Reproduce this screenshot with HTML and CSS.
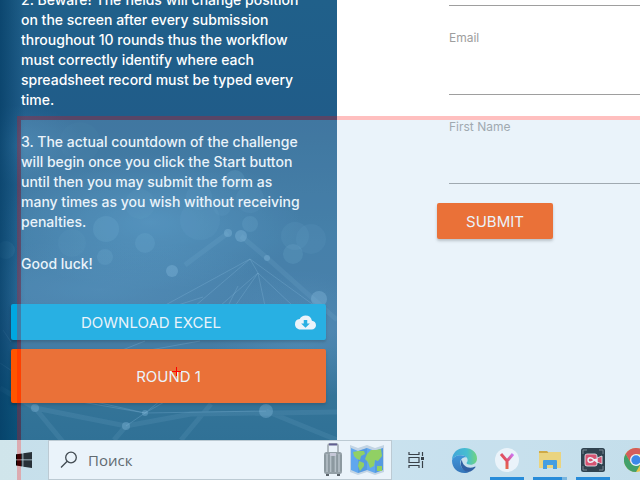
FILE: index.html
```html
<!DOCTYPE html>
<html lang="en">
<head>
<meta charset="utf-8">
<meta name="viewport" content="width=device-width, initial-scale=1">
<title>Challenge</title>
<link rel="stylesheet" href="styles.css">
</head>
<body>
<main class="page">
  <section class="guide">
    <svg class="backdrop" viewBox="0 0 337 440" preserveAspectRatio="none" aria-hidden="true">
      <defs>
        <linearGradient id="base" x1="0" y1="0" x2="0" y2="1">
          <stop offset="0" stop-color="#20608a"/>
          <stop offset=".27" stop-color="#205c89"/>
          <stop offset=".55" stop-color="#286996"/>
          <stop offset=".75" stop-color="#2c6795"/>
          <stop offset=".9" stop-color="#11587f"/>
          <stop offset="1" stop-color="#0b557c"/>
        </linearGradient>
        <linearGradient id="edge">
          <stop offset="0" stop-color="#053e66" stop-opacity=".75"/>
          <stop offset="1" stop-color="#053e66" stop-opacity="0"/>
        </linearGradient>
        <radialGradient id="glow">
          <stop offset="0" stop-color="#4e9aca" stop-opacity=".5"/>
          <stop offset="1" stop-color="#4e9aca" stop-opacity="0"/>
        </radialGradient>
      </defs>
      <rect width="337" height="440" fill="url(#base)"/>
      <ellipse cx="150" cy="222" rx="150" ry="68" fill="url(#glow)"/>
      <ellipse cx="100" cy="290" rx="190" ry="50" fill="url(#glow)" opacity=".6"/>
      <ellipse cx="20" cy="145" rx="65" ry="40" fill="url(#glow)" opacity=".6"/>
      <ellipse cx="300" cy="335" rx="90" ry="65" fill="url(#glow)" opacity=".6"/>
      <g fill="#78b9df" fill-opacity=".15">
        <circle cx="106" cy="229" r="13"/><circle cx="145" cy="243" r="10"/>
        <circle cx="105" cy="257" r="8"/><circle cx="6" cy="250" r="9"/>
        <circle cx="235" cy="180" r="10"/><circle cx="250" cy="199" r="14" opacity=".5"/>
        <circle cx="199" cy="197" r="13" opacity=".5"/><circle cx="200" cy="220" r="20" opacity=".5"/>
        <circle cx="250" cy="224" r="8"/><circle cx="295" cy="236" r="14" opacity=".6"/>
        <circle cx="311" cy="239" r="15" opacity=".5"/><circle cx="293" cy="254" r="10"/>
        <circle cx="72" cy="243" r="14" opacity=".4"/><circle cx="222" cy="207" r="9" opacity=".5"/>
        <circle cx="140" cy="204" r="15" opacity=".4"/><circle cx="80" cy="142" r="20" opacity=".2"/>
      </g>
      <g fill="#7db7dc" fill-opacity=".36">
        <circle cx="228" cy="233" r="4"/><circle cx="241" cy="236" r="6"/>
        <circle cx="172" cy="271" r="6"/><circle cx="267" cy="258" r="3"/>
        <circle cx="319" cy="299" r="8"/><circle cx="266" cy="411" r="7"/>
        <circle cx="126" cy="426" r="4"/><circle cx="145" cy="413" r="3"/>
        <circle cx="35" cy="408" r="4"/>
      </g>
      <g fill="none" stroke="#87bce0" stroke-opacity=".26">
        <path d="M195 306 250 259l65 47M220 306l38-33 35 33M250 259l8 14-23 33M258 273l7 33M250 259l-90 49M175 306l28-9M238 286l-10 20"/>
        <path d="m145 341-45 18 100-18M3 330l8 12M0 363l12 8M60 394l85 19 25-20M70 400l75 13 35-20M145 413l121-2M126 426l19-13"/>
      </g>
      <g fill="none" stroke="#87bce0" stroke-opacity=".12" stroke-width="5">
        <path d="m241 236 26 22 70 62M35 408l28 34M0 388l35 20M185 265l43-32M35 408l91 18 65-12 147-2M126 426l-12 14M211 404l-30 36M266 411l71 29"/>
      </g>
      <rect width="25" height="440" fill="url(#edge)"/>
    </svg>
    <div class="copy">
      <p>2. Beware! The fields will change position<br>on the screen after every submission<br>throughout 10 rounds thus the workflow<br>must correctly identify where each<br>spreadsheet record must be typed every<br>time.</p>
      <p>3. The actual countdown of the challenge<br>will begin once you click the Start button<br>until then you may submit the form as<br>many times as you wish without receiving<br>penalties.</p>
      <p>Good luck!</p>
    </div>
    <div class="actions">
      <a class="btn download" href="#"><span>DOWNLOAD EXCEL</span>
        <svg width="21" height="21" viewBox="0 0 24 24" aria-hidden="true"><path fill="currentColor" d="M19.35 10.04A7.49 7.49 0 0 0 12 4C9.11 4 6.6 5.64 5.35 8.04A5.994 5.994 0 0 0 0 14c0 3.31 2.69 6 6 6h13c2.76 0 5-2.24 5-5 0-2.64-2.05-4.78-4.65-4.96zM17 13l-5 5-5-5h3V9h4v4h3z"/></svg>
      </a>
      <button class="btn round" type="button">ROUND 1</button>
    </div>
  </section>
  <form class="entry">
    <div class="field first"><input type="text" aria-label="Address"></div>
    <div class="field"><label for="email">Email</label><input id="email" type="text"></div>
    <div class="field"><label for="first-name">First Name</label><input id="first-name" type="text"></div>
    <button class="btn submit" type="button">SUBMIT</button>
  </form>
</main>

<footer class="taskbar">
  <button class="start" type="button" aria-label="Start">
    <svg width="16" height="16" viewBox="0 0 16 16"><path d="M0 2.3 6.5 1.4v6.1H0zM7.3 1.3 16 0v7.5H7.3zM0 8.3h6.5v6.2L0 13.6zM7.3 8.3H16V16l-8.7-1.3z"/></svg>
  </button>
  <label class="search">
    <svg width="18" height="18" viewBox="0 0 18 18" fill="none" stroke="#222" stroke-width="1.3"><circle cx="11" cy="6.5" r="5.3"/><path d="M7.2 10.3 1 16.5"/></svg>
    <input type="text" placeholder="Поиск" aria-label="Поиск">
    <svg class="suitcase" width="20" height="34" viewBox="0 0 20 34">
      <path d="M5 11V2.5Q5 1 6.500 1h7Q15 1 15 2.500V11" fill="none" stroke="#999" stroke-width="1.500"/>
      <path d="M6 1.500h8" stroke="#4a3d76" stroke-width="2"/>
      <rect x="3" y="30" width="3" height="3" fill="#444"/><rect x="14" y="30" width="3" height="3" fill="#444"/>
      <rect x="1" y="9" width="18" height="22" rx="2.500" fill="#8e9293"/>
      <path d="M4 11v18M7.500 11v18M12.500 11v18M16 11v18" stroke="#b9bcbd" stroke-width="1.500"/>
      <path d="M2 12v16M6 12v17M10 12v17M14 12v17M18 12v16" stroke="#747879" stroke-width=".7"/>
      <rect x="7" y="10" width="6" height="3" fill="#cfc6d2"/>
    </svg>
    <svg class="map" width="34" height="32" viewBox="0 0 34 32">
      <path d="m0 1 8 3 9-3 8 3 9-3v27l-9 3-8-3-9 3-8-3z" fill="#cbd7e2"/>
      <path d="m1 4 7 3 9-3 8 3 8-3v22l-8 3-8-3-9 3-7-3z" fill="#4a9cf0"/>
      <path d="m8 7 9-3v22l-9 3zM25 7l8-3v22l-8 3z" fill="#2c78c7" opacity=".45"/>
      <path d="m3 8 5-1 6 0 1 3-4 2-1 4-3-1-3-3zM9 17l5 2 0 3-4 5-2-5zM17 10l4-4 5 0 5-1 1 7-4 5-3-1-1 6-4 2-2-6-3-3zM27 22h5v5h-5z" fill="#8bd13b"/>
    </svg>
  </label>
  <nav class="apps">
    <button type="button" class="app" aria-label="Task view"><svg width="17" height="16" viewBox="0 0 17 16" fill="none" stroke="#161616" stroke-width="1.200"><path d="M1 0v2.500h10V0M1 16v-2.500h10V16M1 5.500h10v5H1zM14.500 0v4M14.500 9v7"/><path d="M13 5h3v3h-3z" fill="#161616" stroke="none"/></svg></button>
    <button type="button" class="app" aria-label="Edge"><svg width="25" height="25" viewBox="0 0 24 24">
      <defs><linearGradient id="eg1"><stop offset="0" stop-color="#239bd5"/><stop offset=".6" stop-color="#28b9c9"/><stop offset="1" stop-color="#62d75c"/></linearGradient><linearGradient id="eg2" x1="0" y1="0" x2="0" y2="1"><stop offset="0" stop-color="#2086d6"/><stop offset="1" stop-color="#125bab"/></linearGradient></defs>
      <path d="M0 12C0 4 6 0 12 0c7 0 12 4.500 12 10 0 4-3 6-6 6-2.500 0-4-.8-4-1.700 0-.6 1-1 1-2.800C15 9 12 7 8.500 7 4 7 1 9 0 12z" fill="url(#eg1)"/>
      <path d="M0 12c1-3 4-5 8.500-5 2.500 0 4.500.8 5.500 2-3-.7-6 1.500-6 5 0 5 4 9 9 8.500-1.500 1-3 1.500-5 1.500C5 24 0 19 0 12z" fill="url(#eg2)"/>
      <path d="M9.500 11C7 15 9 21 14 22.800c4 .8 7-2 8.500-4.300.3-.6-.2-.8-.7-.6-5.500 2.500-11.800 0-12.300-6.900z" fill="#0b3f8e"/>
    </svg></button>
    <button type="button" class="app open" aria-label="Yandex"><svg width="24" height="24" viewBox="0 0 24 24"><defs><linearGradient id="yg" x1="0" y1="1" x2="1" y2="0"><stop offset="0" stop-color="#ff6a00"/><stop offset=".5" stop-color="#f32a35"/><stop offset="1" stop-color="#db5cff"/></linearGradient></defs><circle cx="12" cy="12" r="12" fill="#fff"/><path d="m6 6 6 7 6-7M12 12v9" fill="none" stroke="url(#yg)" stroke-width="3"/></svg></button>
    <button type="button" class="app open stacked" aria-label="Files"><svg width="22" height="20" viewBox="0 0 22 20"><path d="M0 1h8l2 2h-2v3H0z" fill="#dca013"/><path d="M0 3h9l1-1h12v16H0z" fill="#ffd75e"/><path d="M4 18.500V11q0-1 1-1h12q1 0 1 1v8h-4v-4H8v4H4z" fill="#2690df"/></svg></button>
    <button type="button" class="app open" aria-label="Recorder"><svg width="24" height="24" viewBox="0 0 24 24"><rect width="24" height="24" rx="2.500" fill="#0b1820"/><path d="M2 6V2h4M18 2h4v4M22 18v4h-4M6 22H2v-4" fill="none" stroke="#6a7378"/><path d="M6 6h8q2 0 2 2v2l5-2v8l-5-2v2q0 2-2 2H6q-2 0-2-2V8q0-2 2-2z" fill="#e52e4d" stroke="#fff" stroke-width=".8"/><path d="M13 12c-2-3-6-3-6 0s4 3 6 0l3-1v3l-3-2" fill="none" stroke="#fff" stroke-width="1.400"/></svg></button>
    <button type="button" class="app" aria-label="Chrome"><svg width="24" height="24" viewBox="0 0 24 24"><circle cx="12" cy="12" r="12" fill="#fbc116"/><path d="M1.600 6A12 12 0 0 1 22.400 6H12L6.800 15z" fill="#e33b2e"/><path d="M1.600 6A12 12 0 0 0 12 24l5.200-9H6.800z" fill="#229342"/><circle cx="12" cy="12" r="6" fill="#fff"/><circle cx="12" cy="12" r="4.700" fill="#1a73e8"/></svg></button>
  </nav>
</footer>

<div class="capture"></div>
<svg class="cursor" width="9" height="9" viewBox="0 0 9 9" aria-hidden="true"><path d="M4.500 0v9M0 4.500h9" stroke="#f00"/></svg>
</body>
</html>
```
FILE: styles.css
```css
* {
  box-sizing: border-box;
}

body {
  margin: 0;
  height: 100vh;
  display: flex;
  flex-direction: column;
  position: relative;
  overflow: hidden;
  background: #fff;
  font-family: Inter, "Open Sans", sans-serif;
}

button,
input {
  font: inherit;
  border: 0;
  padding: 0;
  border-radius: 0;
  background: none;
  outline: 0;
}

.page {
  flex: 1;
  min-height: 0;
  display: grid;
  grid-template-columns: 337px 1fr;
}

.guide {
  position: relative;
  overflow: hidden;
}

.backdrop {
  position: absolute;
  inset: 0;
  width: 100%;
  height: 100%;
}

.copy {
  position: relative;
  margin-top: -10px;
  padding-left: 21px;
  color: #fff;
  font-size: 14px;
  font-weight: 500;
  line-height: 20px;
  white-space: nowrap;
}

.copy p {
  margin: 0 0 22px;
}

.actions {
  position: relative;
  display: flex;
  flex-direction: column;
  gap: 9px;
  padding: 8px 11px 0;
}

.btn {
  display: flex;
  align-items: center;
  justify-content: center;
  height: 36px;
  color: #fff;
  font-size: 15px;
  text-decoration: none;
  border-radius: 2px;
  background: #ff5500;
  box-shadow: 0 2px 3px rgba(0, 0, 0, .25);
}

.download {
  background: #00a7e1;
  padding-right: 10px;
}

.download span {
  flex: 1;
  text-align: center;
  padding-right: 4px;
}

.round {
  height: 54px;
}

.entry {
  display: flex;
  flex-direction: column;
  padding-left: 100px;
  overflow: hidden;
}

.field {
  height: 89px;
  display: flex;
  flex-direction: column;
  justify-content: space-between;
  margin-left: 12px;
  padding-top: 23px;
  color: #9e9e9e;
  font-size: 12px;
  line-height: 18px;
}

.field input {
  width: 100%;
  height: 32px;
  border-bottom: 1px solid #9e9e9e;
}

.field.first {
  height: 6px;
  padding: 0;
  justify-content: flex-end;
}

.submit {
  width: 116px;
  margin-top: 19px;
}

.taskbar {
  height: 40px;
  display: flex;
  background: linear-gradient(90deg, #d0e5eb, #d6eaf1 50%, #cee4ec);
}

.start {
  width: 48px;
  display: flex;
  align-items: center;
  justify-content: center;
}

.search {
  width: 344px;
  display: flex;
  align-items: center;
  padding: 0 7px 0 11px;
  background: #fff;
  border: 1px solid #c3c9cc;
}

.search input {
  flex: 1;
  min-width: 0;
  margin-left: 10px;
  font: 15px "Open Sans", sans-serif;
}

.search input::placeholder {
  color: #4b4b4b;
  opacity: 1;
}

.map {
  margin-left: 7px;
}

.apps {
  flex: 1;
  min-width: 0;
  display: flex;
  overflow: hidden;
}

.app {
  flex: 0 0 34px;
  margin: 0 5px 0 4px;
  display: flex;
  align-items: center;
  justify-content: center;
  border-bottom: 3px solid transparent;
  border-top: 3px solid transparent;
}

.app:first-child {
  margin: 0 10px 0 7px;
}

.app.open {
  border-bottom-color: #0078d4;
}

.app.stacked {
  border-image: linear-gradient(90deg, #0078d4 78%, #6bafdc 78%) 3;
  border-image-width: 0 0 3px;
}

.capture {
  position: absolute;
  inset: 116px -4px -4px 17px;
  border: 4px solid rgba(255, 0, 0, .25);
  background: rgba(167, 204, 233, .24);
  background-clip: padding-box;
  pointer-events: none;
}

.cursor {
  position: absolute;
  left: 172px;
  top: 367px;
  pointer-events: none;
}
```
